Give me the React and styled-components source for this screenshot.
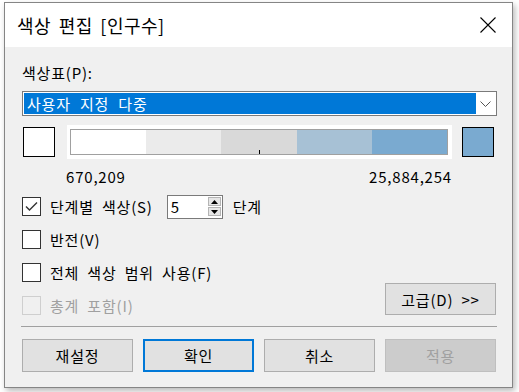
import React from 'react';
import styled, { createGlobalStyle, css } from 'styled-components';

const GlobalStyle = createGlobalStyle`
  html, body {
    margin: 0;
    background: #fff;
  }
  body {
    font-family: "Noto Sans CJK KR", "Noto Sans", sans-serif;
    color: #000;
  }
`;

const Backdrop = styled.div`
  width: 519px;
  height: 392px;
  padding: 2px 0 0 4px;
  box-sizing: border-box;
  overflow: hidden;
`;

const Dialog = styled.div`
  width: 509px;
  height: 386px;
  box-sizing: border-box;
  border: 1px solid #858585;
  background: #f0f0f0;
  box-shadow: 2px 3px 6px rgba(0, 0, 0, 0.28);
  display: flex;
  flex-direction: column;
`;

const TitleBar = styled.div`
  height: 44px;
  background: #fff;
  display: flex;
  align-items: center;
  justify-content: space-between;
  padding: 0 16px 0 12px;
`;

const Title = styled.div`
  font-size: 18px;
  line-height: 24px;
  letter-spacing: 0.5px;
  word-spacing: 3px;
`;

const Body = styled.div`
  padding: 0 15px 0 17px;
  display: flex;
  flex-direction: column;
  font-size: 15px;
  letter-spacing: 0.8px;
  word-spacing: 4px;
`;

const Label = styled.div`
  margin-top: 16px;
  line-height: 20px;
`;

const Select = styled.div`
  margin-top: 8px;
  height: 25px;
  box-sizing: border-box;
  border: 1px solid #7a7a7a;
  background: #fff;
  padding: 1px;
  display: flex;
  align-items: stretch;
`;

const Selected = styled.div`
  flex: 1;
  background: #0078d7;
  color: #fff;
  padding-left: 3px;
  line-height: 21px;
  word-spacing: 5px;
`;

const Arrow = styled.div`
  width: 19px;
  display: flex;
  align-items: center;
  justify-content: center;
`;

const RampRow = styled.div`
  margin-top: 9px;
  height: 34px;
  display: flex;
  align-items: center;
`;

const Swatch = styled.div`
  width: 32px;
  height: 30px;
  box-sizing: border-box;
  border: 1px solid #000;
  background: ${(p) => p.$color};
  margin-left: ${(p) => p.$ml}px;
`;

const RampFrame = styled.div`
  width: 385px;
  height: 34px;
  box-sizing: border-box;
  background: #fff;
  padding: 4px 4px 4px 3px;
  margin-left: 12px;
`;

const Ramp = styled.div`
  position: relative;
  height: 26px;
  box-sizing: border-box;
  border: 1px solid #a0a0a0;
  display: flex;
`;

const Step = styled.div`
  flex: 1;
  background: ${(p) => p.$color};
`;

const Tick = styled.div`
  position: absolute;
  left: 50%;
  bottom: 0;
  width: 1px;
  height: 4px;
  background: #000;
`;

const Range = styled.div`
  margin-top: 8px;
  padding: 0 45px 0 44px;
  display: flex;
  justify-content: space-between;
  line-height: 20px;
`;

const Options = styled.div`
  margin-top: 3px;
  display: flex;
  justify-content: space-between;
  align-items: flex-end;
`;

const OptionList = styled.div`
  display: flex;
  flex-direction: column;
`;

const OptionRow = styled.div`
  height: 33px;
  display: flex;
  align-items: center;
  color: ${(p) => (p.$disabled ? '#a0a0a0' : '#000')};
`;

const Box = styled.div`
  width: 19px;
  height: 19px;
  box-sizing: border-box;
  border: 1px solid ${(p) => (p.$disabled ? '#cfcfcf' : '#333')};
  background: ${(p) => (p.$disabled ? '#f0f0f0' : '#fff')};
  margin-right: 9px;
  display: flex;
  align-items: center;
  justify-content: center;
`;

const Spin = styled.div`
  margin-left: 14px;
  width: 56px;
  height: 24px;
  box-sizing: border-box;
  border: 1px solid #7a7a7a;
  background: #fff;
  display: flex;
  align-items: center;
  justify-content: space-between;
  padding: 0 1px 0 3px;
`;

const SpinButtons = styled.div`
  display: flex;
  flex-direction: column;
  gap: 1px;
`;

const SpinButton = styled.div`
  width: 13px;
  height: 9px;
  box-sizing: border-box;
  border: 1px solid #b4b4b4;
  background: #e6e6e6;
  display: flex;
  align-items: center;
  justify-content: center;
`;

const Unit = styled.span`
  margin-left: 10px;
`;

const buttonBase = css`
  height: 33px;
  width: 111px;
  box-sizing: border-box;
  border: 1px solid #adadad;
  background: #e1e1e1;
  font-family: inherit;
  font-size: 15px;
  color: #000;
  padding: 0;
  display: flex;
  align-items: center;
  justify-content: center;
`;

const AdvancedButton = styled.div`
  ${buttonBase}
  height: 32px;
  margin: 0 1px 7px 0;
`;

const Separator = styled.div`
  margin: 4px 0 0 -1px;
  height: 1px;
  background: #a0a0a0;
`;

const ButtonBar = styled.div`
  margin-top: 12px;
  display: flex;
  gap: 10px;
`;

const Button = styled.div`
  ${buttonBase}
  ${(p) =>
    p.$primary &&
    css`
      border: 2px solid #0078d7;
    `}
  ${(p) =>
    p.$disabled &&
    css`
      background: #cccccc;
      border-color: #bfbfbf;
      color: #a0a0a0;
    `}
`;

const steps = ['#ffffff', '#ebebeb', '#d9d9d9', '#a7c1d5', '#7aaad0'];

const Check = () => (
  <svg width="13" height="11" viewBox="0 0 13 11">
    <polyline points="1,5.5 4.5,9 12,1.5" fill="none" stroke="#333" strokeWidth="1.4" />
  </svg>
);

const Option = ({ checked, disabled, children }) => (
  <OptionRow $disabled={disabled}>
    <Box $disabled={disabled}>{checked && <Check />}</Box>
    {children}
  </OptionRow>
);

export default function App() {
  return (
    <Backdrop>
      <GlobalStyle />
      <Dialog>
        <TitleBar>
          <Title>색상 편집 [인구수]</Title>
          <svg width="16" height="16" viewBox="0 0 16 16">
            <path d="M0.5 0.5 L15.5 15.5 M15.5 0.5 L0.5 15.5" stroke="#000" strokeWidth="1.1" />
          </svg>
        </TitleBar>
        <Body>
          <Label>색상표(P):</Label>
          <Select>
            <Selected>사용자 지정 다중</Selected>
            <Arrow>
              <svg width="11" height="6" viewBox="0 0 11 6">
                <polyline points="0.5,0.5 5.5,5.5 10.5,0.5" fill="none" stroke="#555" strokeWidth="1" />
              </svg>
            </Arrow>
          </Select>
          <RampRow>
            <Swatch $color="#fff" $ml={1} />
            <RampFrame>
              <Ramp>
                {steps.map((c) => (
                  <Step key={c} $color={c} />
                ))}
                <Tick />
              </Ramp>
            </RampFrame>
            <Swatch $color="#7aaad0" $ml={10} />
          </RampRow>
          <Range>
            <span>670,209</span>
            <span>25,884,254</span>
          </Range>
          <Options>
            <OptionList>
              <Option checked>
                단계별 색상(S)
                <Spin>
                  <span>5</span>
                  <SpinButtons>
                    <SpinButton>
                      <svg width="7" height="4" viewBox="0 0 7 4">
                        <polygon points="0,4 3.5,0 7,4" fill="#000" />
                      </svg>
                    </SpinButton>
                    <SpinButton>
                      <svg width="7" height="4" viewBox="0 0 7 4">
                        <polygon points="0,0 3.5,4 7,0" fill="#000" />
                      </svg>
                    </SpinButton>
                  </SpinButtons>
                </Spin>
                <Unit>단계</Unit>
              </Option>
              <Option>반전(V)</Option>
              <Option>전체 색상 범위 사용(F)</Option>
              <Option disabled>총계 포함(I)</Option>
            </OptionList>
            <AdvancedButton>고급(D) &gt;&gt;</AdvancedButton>
          </Options>
          <Separator />
          <ButtonBar>
            <Button>재설정</Button>
            <Button $primary>확인</Button>
            <Button>취소</Button>
            <Button $disabled>적용</Button>
          </ButtonBar>
        </Body>
      </Dialog>
    </Backdrop>
  );
}
